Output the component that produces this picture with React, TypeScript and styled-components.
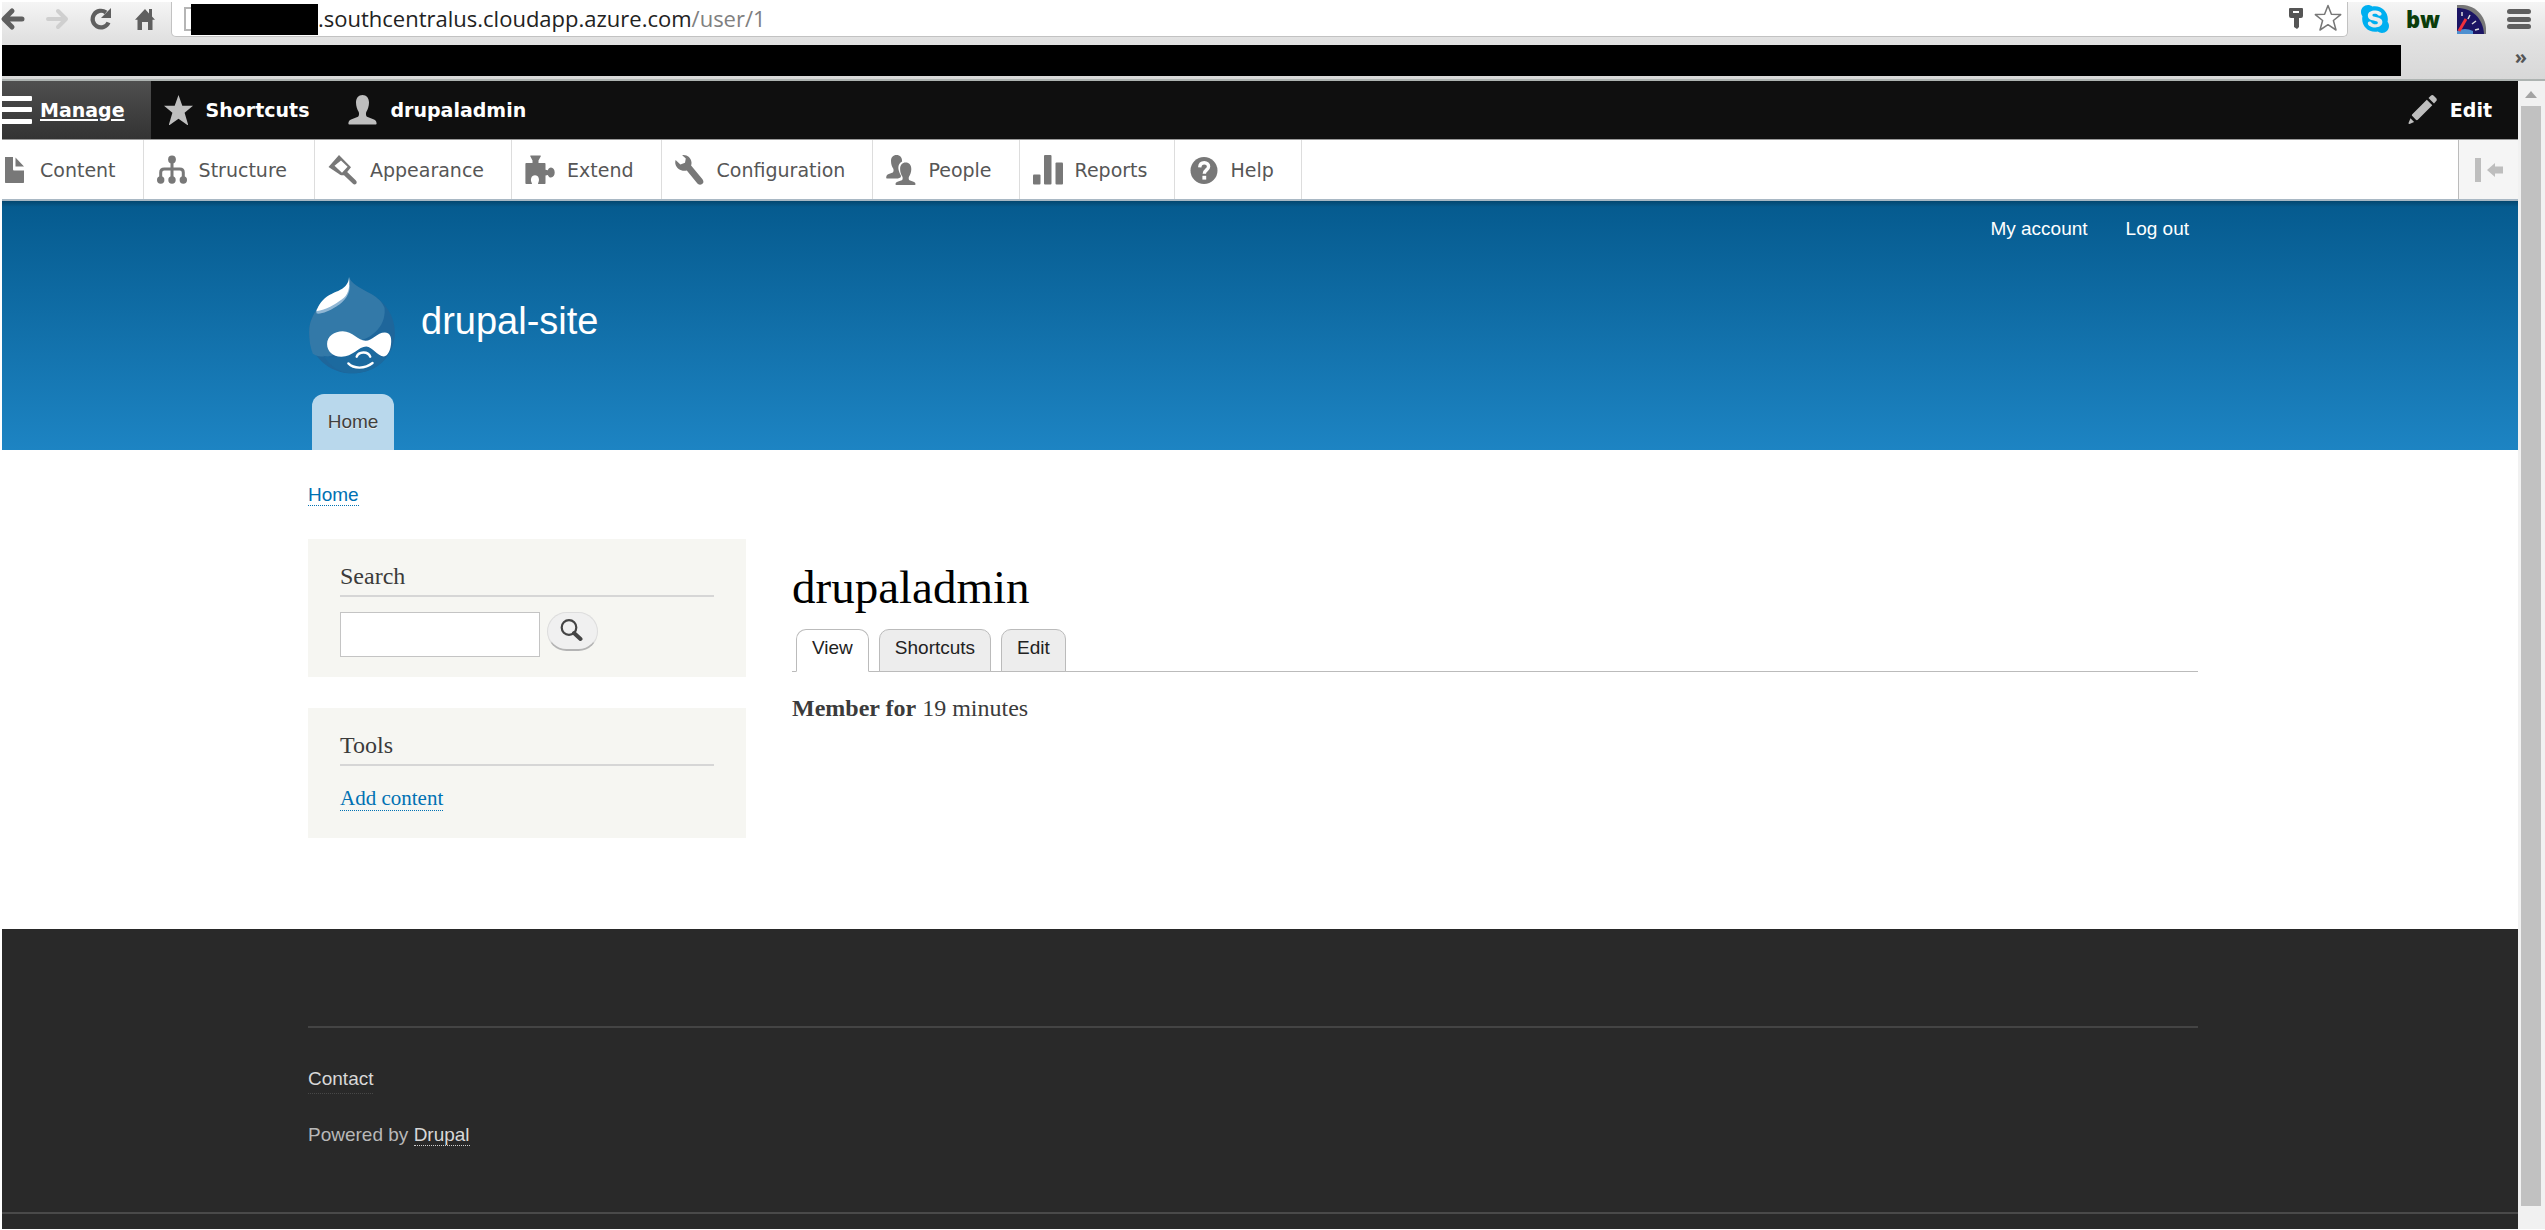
import React from 'react';
import styled, { createGlobalStyle, css } from 'styled-components';
import { FaSkype } from 'react-icons/fa';

const sans = `"Liberation Sans", Arial, sans-serif`;
const serif = `"Liberation Serif", "Times New Roman", serif`;
const admin = `"DejaVu Sans", Verdana, sans-serif`;
const system = `"Open Sans", "Noto Sans", sans-serif`;

const GlobalStyle = createGlobalStyle`
  *, *::before, *::after { box-sizing: border-box; }
  body { margin: 0; background: #fff; font-family: ${sans}; }
  a { color: inherit; text-decoration: none; }
  h1, h2, p, ul { margin: 0; padding: 0; font-weight: normal; }
  ul { list-style: none; }
  svg { display: block; flex: none; }
  button { font: inherit; cursor: pointer; }
`;

/* ---------- browser chrome ---------- */

const Window = styled.div`
  min-height: 100vh;
  display: flex;
  flex-direction: column;
  padding: 2px 0 1px 2px;
`;

const Chrome = styled.header`
  background: linear-gradient(#f5f5f5, #e2e2e2 45%, #d8d8d8);
  border-bottom: 2px solid #adb3b1;
`;

const AddressRow = styled.div`
  display: flex;
  align-items: flex-start;
  height: 42px;
`;

const NavButtons = styled.div`
  display: flex;
  gap: 18px;
  padding-top: 4px;
  width: 171px;
  margin-left: -2px;
`;

const IconButton = styled.button`
  display: flex;
  align-items: center;
  justify-content: center;
  width: 26px;
  height: 26px;
  padding: 0;
  border: 0;
  background: none;
  color: ${(p) => p.color || '#5f5f5f'};
`;

const Omnibox = styled.div`
  flex: 1;
  display: flex;
  align-items: center;
  height: 35px;
  padding: 0 6px 0 12px;
  background: #fff;
  border: 1px solid #c2c2c2;
  border-top: 0;
  border-radius: 0 0 5px 5px;
  font: 22px/30px ${system};
  color: #222;
`;

const PageChip = styled.span`
  width: 7px;
  height: 24px;
  border: 2px solid #b5b5b5;
  border-right: 0;
`;

const HiddenHost = styled.span`
  width: 127px;
  height: 31px;
  background: #000;
`;

const Path = styled.span`
  flex: 1;
  padding-bottom: 3px;
  color: #808080;
`;

const Host = styled.span`
  color: #222;
`;

const PageActions = styled.div`
  display: flex;
  gap: 6px;
  padding-bottom: 2px;
`;

const Extensions = styled.div`
  display: flex;
  gap: 18px;
  padding: 2px 11px 0 12px;
`;

const ExtensionButton = styled(IconButton)`
  width: 30px;
  height: 30px;
`;

const BwLabel = styled.span`
  font: 800 22px/28px ${system};
  color: #0b3d0b;
`;

const Bookmarks = styled.div`
  display: flex;
  align-items: flex-start;
  height: 35px;
  padding-top: 1px;
`;

const HiddenBookmarks = styled.div`
  flex: 1;
  height: 31px;
  margin-right: 114px;
  background: #000;
`;

const Overflow = styled.button`
  padding: 0;
  margin: 0 18px 0 0;
  border: 0;
  background: none;
  font: bold 20px/24px ${system};
  color: #555;
`;

const Viewport = styled.div`
  flex: 1;
  display: flex;
`;

const Page = styled.div`
  flex: 1;
  min-width: 0;
  overflow: hidden;
  display: flex;
  flex-direction: column;
`;

const Scrollbar = styled.div`
  width: 27px;
  display: flex;
  flex-direction: column;
  align-items: center;
  padding: 10px 2px 23px 1px;
  gap: 8px;
  background: #f1f1f1;
`;

const Thumb = styled.div`
  flex: 1;
  width: 20px;
  background: #c1c1c1;
`;

/* ---------- admin toolbar ---------- */

const Bar = styled.nav`
  display: flex;
  height: 58px;
  background: #0f0f0f;
  color: #fff;
  font: bold 19px/58px ${admin};
`;

const Tray = styled.nav`
  display: flex;
  height: 62px;
  background: #fff;
  border-top: 1px solid #999;
  border-bottom: 2px solid #a9b8c4;
  color: #565656;
  font: 19px/56px ${admin};
`;

const edge = css`
  margin-left: -17px;
`;

const Item = styled.a<{ $active?: boolean; $first?: boolean; $end?: boolean }>`
  display: flex;
  align-items: center;
  gap: 12px;
  padding: 0 26px 0 13px;
  ${(p) => p.$first && edge}
  ${(p) => p.$active && css`
    background: linear-gradient(#4f4f4f, #333);
    span { text-decoration: underline; text-decoration-thickness: 2px; text-underline-offset: 2px; }
  `}
  ${(p) => p.$end && css`margin-left: auto;`}
  svg { color: ${(p) => (p.$active ? '#fff' : '#bebebe')}; }
`;

const TrayItem = styled(Item)`
  padding-right: 27px;
  border-right: 1px solid #ddd;
  svg { color: #787878; }
`;

const TrayToggle = styled.button`
  display: flex;
  align-items: center;
  justify-content: center;
  width: 60px;
  margin-left: auto;
  border: 0;
  border-left: 1px solid #bbb;
  background: #f5f5f5;
  color: #bebebe;
`;

/* ---------- site ---------- */

const Container = styled.div`
  width: 100%;
  max-width: 1890px;
  margin: 0 auto;
`;

const Band = styled.div`
  padding-right: 14px;
`;

const SiteHeader = styled(Band)`
  background:
    linear-gradient(rgba(0, 0, 0, 0.22), rgba(0, 0, 0, 0) 6px),
    linear-gradient(#055a8e, #1d84c3);
  color: #fff;
`;

const AccountMenu = styled.nav`
  display: flex;
  justify-content: flex-end;
  gap: 38px;
  padding: 15px 9px 0 0;
  font-size: 19px;
  line-height: 26px;
`;

const Branding = styled.a`
  display: flex;
  align-items: center;
  gap: 26px;
  padding: 35px 0 20px 1px;
`;

const SiteName = styled.span`
  padding-bottom: 10px;
  font-size: 38px;
  line-height: 44px;
`;

const MainTab = styled.a`
  display: block;
  width: 82px;
  height: 56px;
  margin-left: 4px;
  border-radius: 12px 12px 0 0;
  background: #b9d8ec;
  color: #3f3f3f;
  font-size: 19px;
  line-height: 55px;
  text-align: center;
  text-shadow: 0 1px #eee;
`;

const DottedLink = styled.a`
  color: #0071b3;
  border-bottom: 1px dotted #0071b3;
`;

const Breadcrumb = styled.nav`
  padding: 31px 0 30px;
  font-size: 19px;
  line-height: 28px;
`;

const Columns = styled(Container)`
  display: grid;
  grid-template-columns: 438px 1fr;
  gap: 46px;
  padding-bottom: 91px;
`;

const Sidebar = styled.aside`
  display: flex;
  flex-direction: column;
  gap: 31px;
`;

const Block = styled.section`
  padding: 23px 32px 20px;
  background: #f6f6f2;
  font-family: ${serif};
`;

const BlockTitle = styled.h2`
  margin-bottom: 15px;
  padding-bottom: 5px;
  border-bottom: 2px solid #d6d6d6;
  color: #3b3b3b;
  font-size: 24px;
  line-height: 28px;
`;

const SearchForm = styled.form`
  display: flex;
  align-items: flex-start;
  gap: 7px;
`;

const SearchInput = styled.input`
  width: 200px;
  height: 45px;
  padding: 4px 8px;
  border: 1px solid #c4c4c4;
  background: #fff;
  font: 19px ${sans};
`;

const SearchButton = styled.button`
  display: flex;
  align-items: center;
  justify-content: center;
  width: 51px;
  height: 39px;
  padding: 0 3px 2px 0;
  border: 1px solid #ddd;
  border-bottom: 2px solid #b4b4b4;
  border-radius: 20px;
  background: #f0f0f0;
  color: #444;
`;

const BlockList = styled.ul`
  padding-bottom: 3px;
  font-size: 21px;
  line-height: 34px;
`;

const Content = styled.main`
  padding-top: 21px;
  font-family: ${serif};
`;

const Title = styled.h1`
  color: #000;
  font-size: 47px;
  line-height: 54px;
`;

const Tabs = styled.nav`
  display: flex;
  gap: 10px;
  margin: 15px 0 18px;
  padding-left: 4px;
  border-bottom: 1px solid #bbb;
  font: 19px/36px ${sans};
  color: #222;
`;

const Tab = styled.a<{ $active?: boolean }>`
  height: 43px;
  margin-bottom: -1px;
  padding: 0 15px;
  border: 1px solid #bbb;
  border-bottom-color: ${(p) => (p.$active ? '#fff' : '#bbb')};
  border-radius: 10px 10px 0 0;
  background: ${(p) => (p.$active ? '#fff' : '#ededed')};
`;

const Member = styled.p`
  color: #3b3b3b;
  font-size: 24px;
  line-height: 36px;
`;

const Footer = styled.footer`
  flex: 1;
  background: #292929;
  color: #b8b8b8;
  font-size: 19px;
  line-height: 28px;
`;

const FooterInner = styled(Band)`
  padding-top: 97px;
  border-bottom: 2px solid #4a4a4a;
`;

const FooterBody = styled(Container)`
  display: flex;
  flex-direction: column;
  align-items: flex-start;
  gap: 27px;
  padding: 37px 0 63px;
  border-top: 2px solid #444;
`;

const FooterLink = styled.a<{ $faint?: boolean }>`
  color: #d8d8d8;
  border-bottom: 1px dotted ${(p) => (p.$faint ? '#484848' : '#d0d0d0')};
`;

/* ---------- icons ---------- */

type G = { children: React.ReactNode };
const Glyph = ({ children }: G) => (
  <svg width="30" height="30" viewBox="0 0 30 30" fill="currentColor" aria-hidden="true">{children}</svg>
);

const Bars = () => (
  <svg width="30" height="30" viewBox="0 0 30 30" fill="currentColor" overflow="visible" aria-hidden="true">
    <rect x="0" y="1" width="34" height="5" rx="1" /><rect x="0" y="12" width="34" height="5" rx="1" /><rect x="0" y="24" width="34" height="5" rx="1" />
  </svg>
);
const Star = () => (
  <Glyph><path d="M14.500 0l3.800 10.800H29l-8.400 7 3.400 11.400c.2.700-.4 1-1 .6l-8.500-6-8.500 6c-.6.400-1.200.1-1-.6l3.400-11.400L0 10.800h10.700z" /></Glyph>
);
const User = () => (
  <Glyph><path d="M14.500 0C18.500 0 21 3 21 7.500c0 4-1.300 7.200-2.600 9.200-.8 1.300-.5 4.300.6 5.100l7 2.600c2 .8 2.600 2.300 2.600 4.300 0 .6-.3.800-.9.800H1.300c-.6 0-.9-.2-.9-.8 0-2 .6-3.500 2.600-4.300l7-2.600c1.100-.8 1.400-3.800.6-5.100C9.300 14.700 8 11.500 8 7.500 8 3 10.500 0 14.500 0z" /></Glyph>
);
const Pencil = () => (
  <Glyph><path d="M20.500 3l2.300-2.300c1-.9 2.200-.8 3.200.2l2 2c1 1 1.100 2.200.2 3.200L26 8.500zM18.800 4.700l5.500 5.500L9.800 24.700c-.6.600-1.300.6-1.900 0l-3.600-3.600c-.6-.6-.6-1.300 0-1.900zM2.500 23.300l3.600 3.600-4.600 2c-.6.200-1.200-.3-1-1z" /></Glyph>
);
const FileIcon = () => (
  <Glyph><path d="M7 2h8v12c0 1 .4 1.500 1.500 1.500H26V27c0 .7-.3 1-1 1H8c-.7 0-1-.3-1-1zM17.500 2.500L26 11.500h-8.500z" /></Glyph>
);
const Structure = () => (
  <Glyph><circle cx="15" cy="4.500" r="3.900" /><circle cx="3.700" cy="25" r="3.700" /><circle cx="15" cy="25" r="3.700" /><circle cx="26.300" cy="25" r="3.700" /><path d="M15 4v21M3.700 25v-7.500q0-3.500 3.500-3.500h15.600q3.500 0 3.500 3.500V25" fill="none" stroke="currentColor" strokeWidth="3" /></Glyph>
);
const Hammer = () => (
  <Glyph><path fillRule="evenodd" d="M11 0L23 12.200 19.200 17l8.500 8.300c1.300 1.300 1.200 2.500.5 3.400-1 1-2.300 1-3.500-.3L16 20.200c-2.500.2-3.800 0-4.600-.9L.5 12zM6.500 10.800l7.500 7 5.600-6-6.600-6.300z" /></Glyph>
);
const Puzzle = () => (
  <Glyph><path d="M6 .5c-.7 0-1 .4-.6 1L7.500 5.500V8H1.500C.8 8 .4 8.400.4 9v19c0 .7.4 1 1.100 1h5c.5 0 .6-.4.400-.8-2-3.600-.7-8 3.100-8s5.100 4.400 3.100 8c-.2.400-.1.800.4.800h6c.7 0 1-.3 1-1v-7.500l2.300-.6c.7 1.600 1.800 2.700 3.200 2.700 2.200 0 3.700-2.200 3.700-5s-1.500-5-3.700-5c-1.400 0-2.500 1.100-3.200 2.700l-2.300-.6V9c0-.6-.3-1-1-1h-6V5.500l2.200-4c.3-.6 0-1-.6-1z" /></Glyph>
);
const Wrench = () => (
  <Glyph><path d="M7.200.2c4.800-.7 9 2.600 9.300 7.200.1 1.300-.1 2.200-.4 3.200L27.300 24c1.700 2.100 1.300 4-.2 5-1.700 1.300-3.700.9-5.100-.9L11.800 15.400C7 16.800 1.500 14 .4 9c-.3-1.300-.2-2.800.2-4l4.800 4.600 4.600-1.800.8-4.200z" /></Glyph>
);
const People = () => (
  <Glyph><path d="M10.500 0c3.600 0 5.700 2.500 5.600 6.500C12.500 8.200 12 12 12.700 15.300c.5 2.300 1.500 4 2.200 5.200.2 1.400-.2 2-1 2.300l-2 .8H1.200c-.7 0-1-.3-1-1 0-2 .9-3 2.600-3.700l4-1.500c.9-.7 1-2.900.4-4C5.900 11.600 5 9 5 6 5 2.500 7 0 10.500 0z" /><path d="M19.700 7.500c3.500 0 5.600 2.600 5.600 6.500 0 3.200-1 5.700-2.200 7.400-.7 1.100-.5 3.200.4 3.900l4 1.400c1.500.6 2 1.500 2 2.600 0 .4-.3.700-.8.700H10.300c-.6 0-.8-.3-.8-.7 0-1.100.5-2 2-2.600l4.300-1.400c1-.7 1.200-2.800.5-3.900-1.200-1.700-2.200-4.200-2.200-7.400 0-3.900 2.100-6.500 5.600-6.500z" /></Glyph>
);
const Reports = () => (
  <Glyph><rect x="0" y="19.500" width="7.500" height="10" rx="1" /><rect x="11" y="0" width="7.500" height="29.500" rx="1" /><rect x="22.500" y="7.500" width="7.500" height="22" rx="1" /></Glyph>
);
const Help = () => (
  <Glyph><circle cx="16" cy="15.500" r="13.500" /><path d="M11.700 12.300q.3-4.600 4.600-4.600c2.500 0 4.300 1.600 4.300 3.900 0 3.300-4.300 3.400-4.300 7.200" fill="none" stroke="#fff" strokeWidth="3.400" /><rect x="14.400" y="20.800" width="3.800" height="3.800" fill="#fff" /></Glyph>
);

const Druplicon = () => (
  <svg width="86" height="97" viewBox="27 20 258 292" role="img" aria-label="Home">
    <path fill="#1e669b" d="M148 20c4 20 30 32 66 51 42 24 71 65 71 116 0 72-58 123-128 123C87 310 27 257 27 186C27 154 40 134 51 115C62 98 72 84 88 74C108 64 128 58 139 44C145 36 147 30 148 20z" />
    <path fill="#3379a8" d="M148 20c4 20 30 32 66 51 20 12 34 25 40 42 6 60-48 98-88 100-30 2-46 36-72 44-20 5-44 3-56-6-7-18-11-40-11-65C27 154 40 134 51 115C62 98 72 84 88 74C108 64 128 58 139 44C145 36 147 30 148 20z" />
    <path fill="#1c6a9f" d="M70 257c30 10 60 5 90-18 28-25 60-6 84 22 10 4 16-1 18-3-20 33-60 52-105 52-38 0-68-22-87-53z" />
    <path fill="#8fb6d4" d="M149 44C151 70 135 92 110 108C88 122 65 132 50 130C48 126 48 122 50 118z" />
    <path fill="#fff" d="M147 20C146 33 144 38 137 46C125 60 106 64 88 74C68 86 54 104 49 123C78 120 105 102 125 88C145 75 151 50 147 20z" />
    <path fill="#fff" d="M128 183c30 0 46 28 69 29 20 0 34-25 58-25 14 0 20 12 19 28-1 24-10 44-22 44-20-1-34-29-53-30-23 0-42 32-76 31-25 0-42-16-42-38 0-24 22-39 47-39z" />
    <path fill="none" stroke="#fff" strokeWidth="7" strokeLinecap="round" d="M170 260c6-16 34-18 41 0M145 280c16 17 50 17 73-1" />
  </svg>
);

const Magnifier = () => (
  <svg width="23" height="23" viewBox="0 0 23 23" fill="none" stroke="currentColor" aria-hidden="true">
    <circle cx="9" cy="8.500" r="7.300" strokeWidth="2.200" />
    <path d="M14 14l6.500 6" strokeWidth="4" strokeLinecap="round" />
  </svg>
);

const Dial = () => (
  <svg width="29" height="29" viewBox="0 0 29 29" aria-hidden="true">
    <path fill="#777" d="M0 0h6c13 1 22 11 23 23v6H0z" />
    <path fill="#1b1464" d="M0 3c15 0 26 10 27 26H0z" />
    <path fill="#4d8fd0" d="M0 26q8-4 16 0v3H0z" />
    <path stroke="#ddd" strokeWidth="1.500" d="M5 7v4M13 10l-2 4M19 16l-4 3M22 24l-4 1" />
    <path stroke="#f0303c" strokeWidth="3" d="M2 26l7-12" />
  </svg>
);

const tray = [
  { label: 'Content', Icon: FileIcon },
  { label: 'Structure', Icon: Structure },
  { label: 'Appearance', Icon: Hammer },
  { label: 'Extend', Icon: Puzzle },
  { label: 'Configuration', Icon: Wrench },
  { label: 'People', Icon: People },
  { label: 'Reports', Icon: Reports },
  { label: 'Help', Icon: Help },
];

const BrowserChrome = () => (
  <Chrome>
    <AddressRow>
      <NavButtons>
        <IconButton aria-label="Back">
          <svg width="26" height="24" viewBox="0 0 26 24" fill="none" stroke="currentColor" strokeWidth="5" strokeLinecap="round" strokeLinejoin="round"><path d="M12 4L4 12l8 8M5 12h17" /></svg>
        </IconButton>
        <IconButton aria-label="Forward" color="#cfcfcf">
          <svg width="26" height="24" viewBox="0 0 26 24" fill="none" stroke="currentColor" strokeWidth="4" strokeLinecap="round" strokeLinejoin="round"><path d="M14 4l8 8-8 8M21 12H4" /></svg>
        </IconButton>
        <IconButton aria-label="Reload">
          <svg width="24" height="24" viewBox="0 0 24 24"><path d="M19.500 15.500A8.300 8.300 0 1 1 17 5.500" fill="none" stroke="currentColor" strokeWidth="4.200" /><path d="M22 1v10H12z" fill="currentColor" /></svg>
        </IconButton>
        <IconButton aria-label="Home page">
          <svg width="20" height="24" viewBox="0 0 20 24" fill="currentColor"><path d="M10 2l4 4.500V2h3v7.500l3 3.200h-2.500V23h-4.500v-8H7v8H2.500V12.700H0z" /></svg>
        </IconButton>
      </NavButtons>
      <Omnibox>
        <PageChip />
        <HiddenHost />
        <Path><Host>.southcentralus.cloudapp.azure.com</Host>/user/1</Path>
        <PageActions>
          <IconButton aria-label="Saved passwords">
            <svg width="16" height="22" viewBox="0 0 16 22" fill="#555"><path fillRule="evenodd" d="M2 1h12q1 0 1 1v7q0 2-2 2h-2v9l-2 2-3-2v-9H3q-2 0-2-2V2q0-1 1-1zM5 4v2h6V4z" /></svg>
          </IconButton>
          <IconButton aria-label="Bookmark this page">
            <svg width="28" height="28" viewBox="0 0 28 28" fill="#fff" stroke="#777" strokeWidth="1.500" strokeLinejoin="round"><path d="M14 1.500l3.400 8.800 9.300.3-7.300 5.900 2.600 9.500-8-5.300L6 26l2.600-9.500-7.300-5.900 9.300-.3z" /></svg>
          </IconButton>
        </PageActions>
      </Omnibox>
      <Extensions>
        <ExtensionButton aria-label="Skype" color="#00aff0"><FaSkype size={32} /></ExtensionButton>
        <ExtensionButton aria-label="bw"><BwLabel>bw</BwLabel></ExtensionButton>
        <ExtensionButton aria-label="Speed"><Dial /></ExtensionButton>
        <ExtensionButton aria-label="Menu">
          <svg width="24" height="22" viewBox="0 0 24 22" fill="currentColor"><rect y="1" width="24" height="5" rx="2.500" /><rect y="9" width="24" height="5" rx="2.500" /><rect y="16" width="24" height="5" rx="2.500" /></svg>
        </ExtensionButton>
      </Extensions>
    </AddressRow>
    <Bookmarks>
      <HiddenBookmarks />
      <Overflow aria-label="More bookmarks">»</Overflow>
    </Bookmarks>
  </Chrome>
);

export default function App() {
  return (
    <Window>
      <GlobalStyle />
      <BrowserChrome />
      <Viewport>
        <Page>
          <Bar aria-label="Administration">
            <Item href="#manage" $active $first><Bars /><span>Manage</span></Item>
            <Item href="#shortcuts"><Star /><span>Shortcuts</span></Item>
            <Item href="#user"><User /><span>drupaladmin</span></Item>
            <Item href="#edit" $end><Pencil /><span>Edit</span></Item>
          </Bar>
          <Tray aria-label="Administration menu">
            {tray.map(({ label, Icon }, i) => (
              <TrayItem key={label} href={`#${label.toLowerCase()}`} $first={i === 0}><Icon /><span>{label}</span></TrayItem>
            ))}
            <TrayToggle aria-label="Vertical orientation">
              <svg width="28" height="24" viewBox="0 0 28 24" fill="currentColor"><rect width="6" height="24" /><path d="M12 12l8-7v3.500h8v7h-8V19z" /></svg>
            </TrayToggle>
          </Tray>

          <SiteHeader as="header">
            <Container>
              <AccountMenu aria-label="User account">
                <a href="#account">My account</a>
                <a href="#logout">Log out</a>
              </AccountMenu>
              <Branding href="#home"><Druplicon /><SiteName>drupal-site</SiteName></Branding>
              <MainTab href="#home">Home</MainTab>
            </Container>
          </SiteHeader>

          <Band>
            <Container>
              <Breadcrumb aria-label="Breadcrumb"><DottedLink href="#home">Home</DottedLink></Breadcrumb>
            </Container>
            <Columns>
              <Sidebar>
                <Block>
                  <BlockTitle>Search</BlockTitle>
                  <SearchForm role="search" onSubmit={(e) => e.preventDefault()}>
                    <SearchInput type="text" aria-label="Search" />
                    <SearchButton type="submit" aria-label="Search"><Magnifier /></SearchButton>
                  </SearchForm>
                </Block>
                <Block>
                  <BlockTitle>Tools</BlockTitle>
                  <BlockList><li><DottedLink href="#add">Add content</DottedLink></li></BlockList>
                </Block>
              </Sidebar>
              <Content>
                <Title>drupaladmin</Title>
                <Tabs aria-label="Tabs">
                  <Tab href="#view" $active>View</Tab>
                  <Tab href="#user-shortcuts">Shortcuts</Tab>
                  <Tab href="#user-edit">Edit</Tab>
                </Tabs>
                <Member><b>Member for</b> 19 minutes</Member>
              </Content>
            </Columns>
          </Band>

          <Footer>
            <FooterInner>
              <FooterBody>
                <FooterLink href="#contact" $faint>Contact</FooterLink>
                <p>Powered by <FooterLink href="#drupal">Drupal</FooterLink></p>
              </FooterBody>
            </FooterInner>
          </Footer>
        </Page>
        <Scrollbar aria-hidden="true">
          <svg width="12" height="7" viewBox="0 0 12 7" fill="#a3a3a3"><path d="M6 0l6 7H0z" /></svg>
          <Thumb />
        </Scrollbar>
      </Viewport>
    </Window>
  );
}
